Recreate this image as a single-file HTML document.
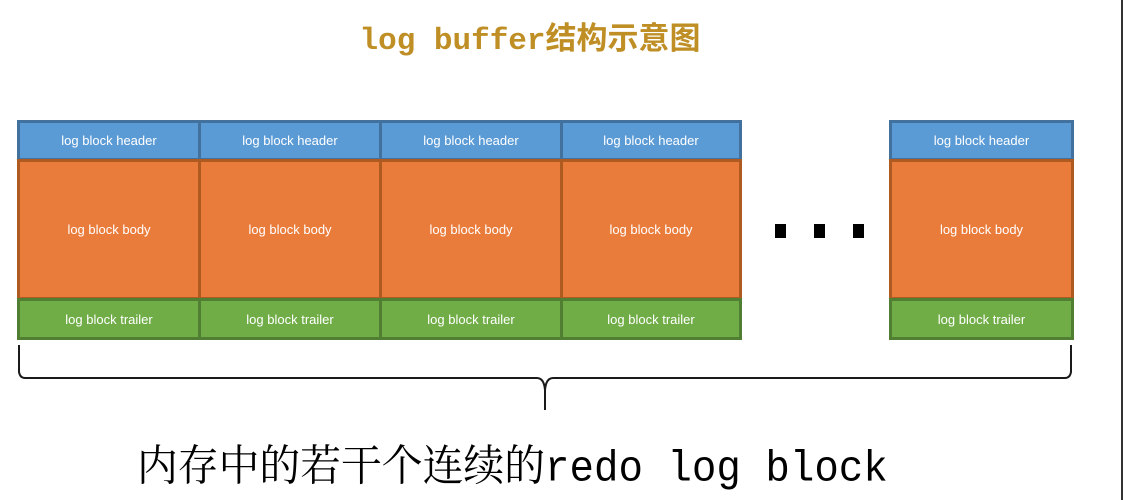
<!DOCTYPE html>
<html><head><meta charset="utf-8"><style>
html,body{margin:0;padding:0;background:#fff;width:1124px;height:500px;overflow:hidden;position:relative}
.t{position:absolute;left:0;width:1060px;top:13px;text-align:center;font:bold 31px "Liberation Mono","Noto Sans CJK SC",monospace;color:#bf8f26;white-space:nowrap}
.c{position:absolute;box-sizing:border-box;border:3px solid;color:#fff;font:13px "Liberation Sans",sans-serif;display:flex;align-items:center;justify-content:center;white-space:nowrap}
.h{background:#5b9bd5;border-color:#41719c;top:120px;height:41px}
.b{background:#ea7c3b;border-color:#ae5a21;top:159px;height:141px}
.r{background:#70ad47;border-color:#507e32;top:298px;height:42px}
.d{position:absolute;top:224px;width:11px;height:14px;background:#000}
.bt{position:absolute;left:137px;top:444px;font:40px "Liberation Mono","Noto Serif CJK SC",monospace;color:#000;white-space:nowrap;line-height:50px;transform:scale(1.02,1.08);transform-origin:left top}
.vl{position:absolute;left:1121px;top:0;width:2px;height:500px;background:#333}
</style></head><body>
<div class="t">log buffer结构示意图</div>

<div class="c h" style="left:17px;width:184px">log block header</div>
<div class="c h" style="left:198px;width:184px">log block header</div>
<div class="c h" style="left:379px;width:184px">log block header</div>
<div class="c h" style="left:560px;width:182px">log block header</div>
<div class="c h" style="left:889px;width:185px">log block header</div>

<div class="c b" style="left:17px;width:184px">log block body</div>
<div class="c b" style="left:198px;width:184px">log block body</div>
<div class="c b" style="left:379px;width:184px">log block body</div>
<div class="c b" style="left:560px;width:182px">log block body</div>
<div class="c b" style="left:889px;width:185px">log block body</div>

<div class="c r" style="left:17px;width:184px">log block trailer</div>
<div class="c r" style="left:198px;width:184px">log block trailer</div>
<div class="c r" style="left:379px;width:184px">log block trailer</div>
<div class="c r" style="left:560px;width:182px">log block trailer</div>
<div class="c r" style="left:889px;width:185px">log block trailer</div>

<div class="d" style="left:775px"></div>
<div class="d" style="left:814px"></div>
<div class="d" style="left:853px"></div>

<svg style="position:absolute;left:0;top:0" width="1124" height="500">
<path d="M19 345 L19 372 Q20 378 25 378 L537 378 Q544 378 545 390 L545 410 M545 410 L545 390 Q546 378 553 378 L1065 378 Q1070 378 1071 372 L1071 345" fill="none" stroke="#1a1a1a" stroke-width="2"/>
</svg>

<div class="bt">内存中的若干个连续的redo log block</div>
<div class="vl"></div>
</body></html>
